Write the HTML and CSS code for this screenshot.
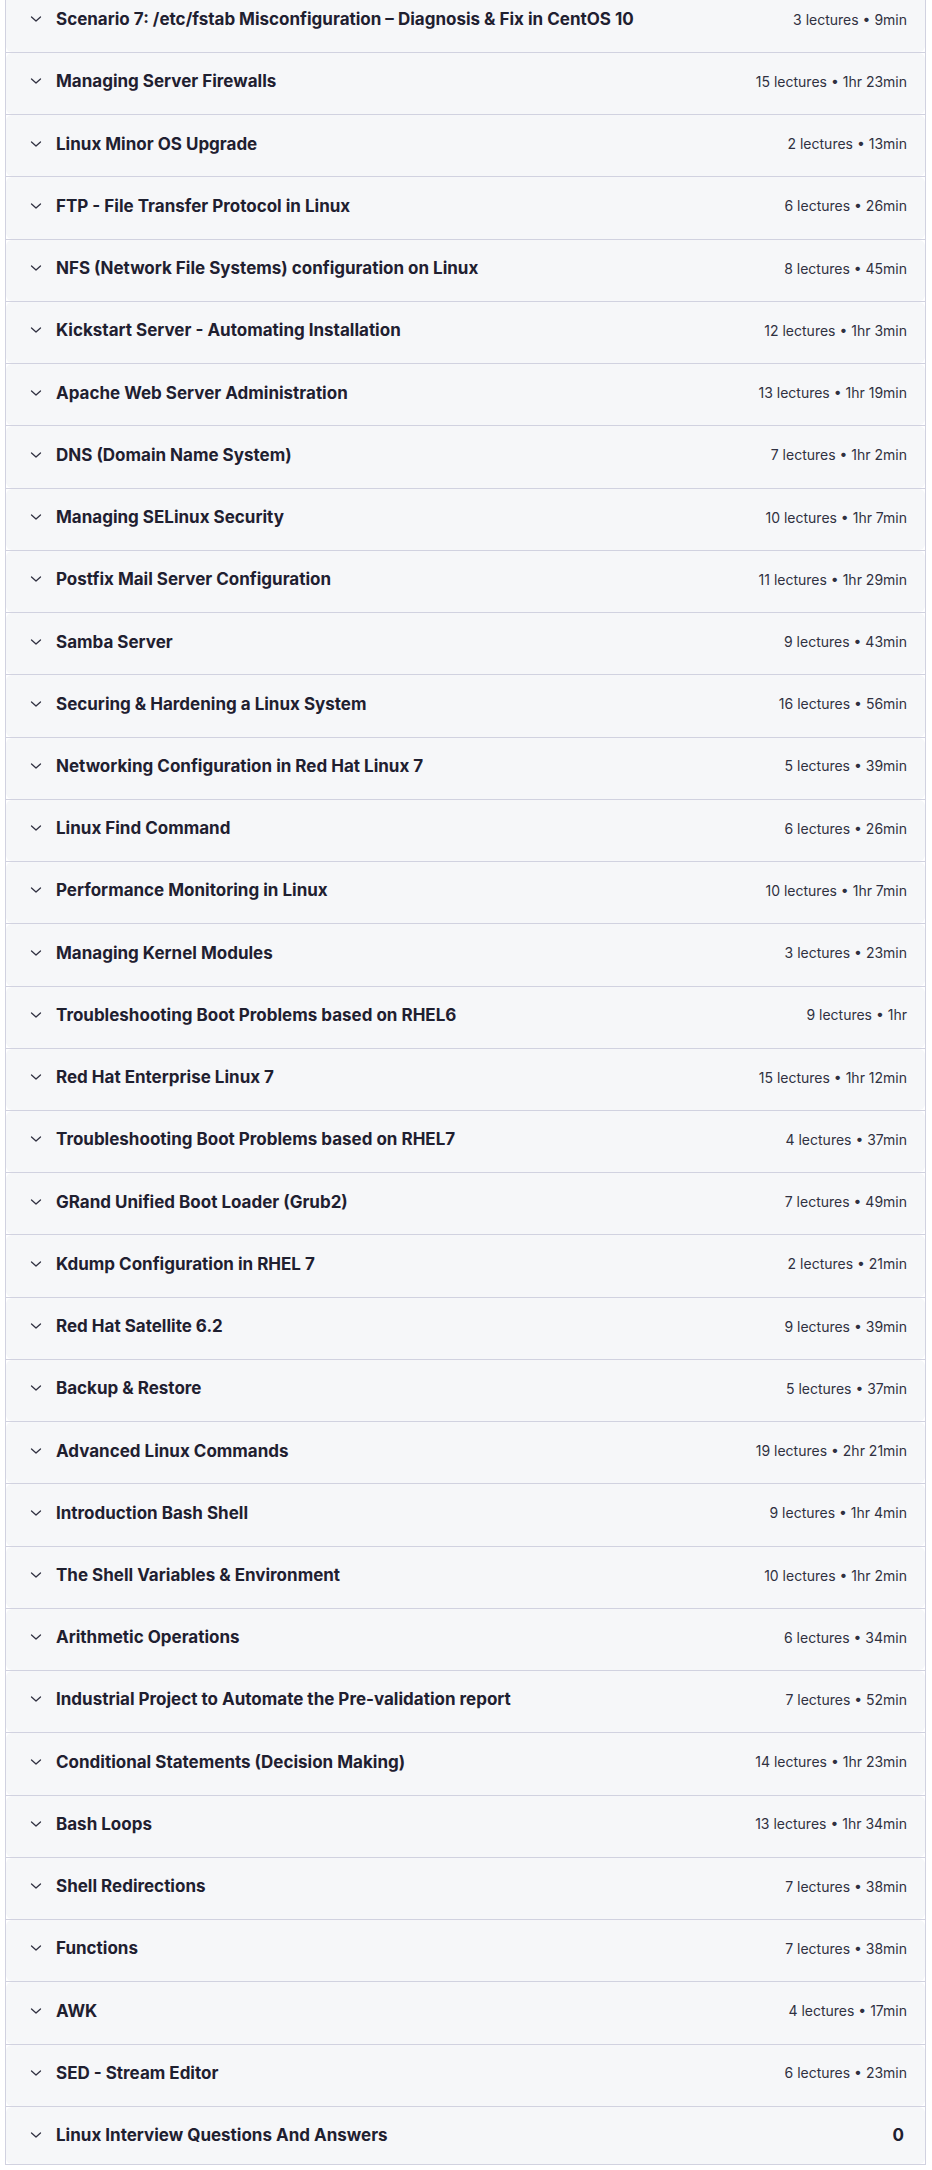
FILE: index.html
```html
<!DOCTYPE html>
<html lang="en">
<head>
    <meta charset="UTF-8">
    <title>Course content</title>
    <link rel="stylesheet" href="styles.css">
</head>
<body>
    <div class="curriculum">
        <div class="section">
            <div class="section-head">
                <svg class="chevron" viewBox="0 0 12 6"><path d="M1.5 1l4.5 4 4.5-4"/></svg>
                <span class="section-title">Scenario 7: /etc/fstab Misconfiguration – Diagnosis &amp; Fix in CentOS 10</span>
                <span class="section-meta">3 lectures • 9min</span>
            </div>
        </div>
        <div class="section">
            <div class="section-head">
                <svg class="chevron" viewBox="0 0 12 6"><path d="M1.5 1l4.5 4 4.5-4"/></svg>
                <span class="section-title">Managing Server Firewalls</span>
                <span class="section-meta">15 lectures • 1hr 23min</span>
            </div>
        </div>
        <div class="section">
            <div class="section-head">
                <svg class="chevron" viewBox="0 0 12 6"><path d="M1.5 1l4.5 4 4.5-4"/></svg>
                <span class="section-title">Linux Minor OS Upgrade</span>
                <span class="section-meta">2 lectures • 13min</span>
            </div>
        </div>
        <div class="section">
            <div class="section-head">
                <svg class="chevron" viewBox="0 0 12 6"><path d="M1.5 1l4.5 4 4.5-4"/></svg>
                <span class="section-title">FTP - File Transfer Protocol in Linux</span>
                <span class="section-meta">6 lectures • 26min</span>
            </div>
        </div>
        <div class="section">
            <div class="section-head">
                <svg class="chevron" viewBox="0 0 12 6"><path d="M1.5 1l4.5 4 4.5-4"/></svg>
                <span class="section-title">NFS (Network File Systems) configuration on Linux</span>
                <span class="section-meta">8 lectures • 45min</span>
            </div>
        </div>
        <div class="section">
            <div class="section-head">
                <svg class="chevron" viewBox="0 0 12 6"><path d="M1.5 1l4.5 4 4.5-4"/></svg>
                <span class="section-title">Kickstart Server - Automating Installation</span>
                <span class="section-meta">12 lectures • 1hr 3min</span>
            </div>
        </div>
        <div class="section">
            <div class="section-head">
                <svg class="chevron" viewBox="0 0 12 6"><path d="M1.5 1l4.5 4 4.5-4"/></svg>
                <span class="section-title">Apache Web Server Administration</span>
                <span class="section-meta">13 lectures • 1hr 19min</span>
            </div>
        </div>
        <div class="section">
            <div class="section-head">
                <svg class="chevron" viewBox="0 0 12 6"><path d="M1.5 1l4.5 4 4.5-4"/></svg>
                <span class="section-title">DNS (Domain Name System)</span>
                <span class="section-meta">7 lectures • 1hr 2min</span>
            </div>
        </div>
        <div class="section">
            <div class="section-head">
                <svg class="chevron" viewBox="0 0 12 6"><path d="M1.5 1l4.5 4 4.5-4"/></svg>
                <span class="section-title">Managing SELinux Security</span>
                <span class="section-meta">10 lectures • 1hr 7min</span>
            </div>
        </div>
        <div class="section">
            <div class="section-head">
                <svg class="chevron" viewBox="0 0 12 6"><path d="M1.5 1l4.5 4 4.5-4"/></svg>
                <span class="section-title">Postfix Mail Server Configuration</span>
                <span class="section-meta">11 lectures • 1hr 29min</span>
            </div>
        </div>
        <div class="section">
            <div class="section-head">
                <svg class="chevron" viewBox="0 0 12 6"><path d="M1.5 1l4.5 4 4.5-4"/></svg>
                <span class="section-title">Samba Server</span>
                <span class="section-meta">9 lectures • 43min</span>
            </div>
        </div>
        <div class="section">
            <div class="section-head">
                <svg class="chevron" viewBox="0 0 12 6"><path d="M1.5 1l4.5 4 4.5-4"/></svg>
                <span class="section-title">Securing &amp; Hardening a Linux System</span>
                <span class="section-meta">16 lectures • 56min</span>
            </div>
        </div>
        <div class="section">
            <div class="section-head">
                <svg class="chevron" viewBox="0 0 12 6"><path d="M1.5 1l4.5 4 4.5-4"/></svg>
                <span class="section-title">Networking Configuration in Red Hat Linux 7</span>
                <span class="section-meta">5 lectures • 39min</span>
            </div>
        </div>
        <div class="section">
            <div class="section-head">
                <svg class="chevron" viewBox="0 0 12 6"><path d="M1.5 1l4.5 4 4.5-4"/></svg>
                <span class="section-title">Linux Find Command</span>
                <span class="section-meta">6 lectures • 26min</span>
            </div>
        </div>
        <div class="section">
            <div class="section-head">
                <svg class="chevron" viewBox="0 0 12 6"><path d="M1.5 1l4.5 4 4.5-4"/></svg>
                <span class="section-title">Performance Monitoring in Linux</span>
                <span class="section-meta">10 lectures • 1hr 7min</span>
            </div>
        </div>
        <div class="section">
            <div class="section-head">
                <svg class="chevron" viewBox="0 0 12 6"><path d="M1.5 1l4.5 4 4.5-4"/></svg>
                <span class="section-title">Managing Kernel Modules</span>
                <span class="section-meta">3 lectures • 23min</span>
            </div>
        </div>
        <div class="section">
            <div class="section-head">
                <svg class="chevron" viewBox="0 0 12 6"><path d="M1.5 1l4.5 4 4.5-4"/></svg>
                <span class="section-title">Troubleshooting Boot Problems based on RHEL6</span>
                <span class="section-meta">9 lectures • 1hr</span>
            </div>
        </div>
        <div class="section">
            <div class="section-head">
                <svg class="chevron" viewBox="0 0 12 6"><path d="M1.5 1l4.5 4 4.5-4"/></svg>
                <span class="section-title">Red Hat Enterprise Linux 7</span>
                <span class="section-meta">15 lectures • 1hr 12min</span>
            </div>
        </div>
        <div class="section">
            <div class="section-head">
                <svg class="chevron" viewBox="0 0 12 6"><path d="M1.5 1l4.5 4 4.5-4"/></svg>
                <span class="section-title">Troubleshooting Boot Problems based on RHEL7</span>
                <span class="section-meta">4 lectures • 37min</span>
            </div>
        </div>
        <div class="section">
            <div class="section-head">
                <svg class="chevron" viewBox="0 0 12 6"><path d="M1.5 1l4.5 4 4.5-4"/></svg>
                <span class="section-title">GRand Unified Boot Loader (Grub2)</span>
                <span class="section-meta">7 lectures • 49min</span>
            </div>
        </div>
        <div class="section">
            <div class="section-head">
                <svg class="chevron" viewBox="0 0 12 6"><path d="M1.5 1l4.5 4 4.5-4"/></svg>
                <span class="section-title">Kdump Configuration in RHEL 7</span>
                <span class="section-meta">2 lectures • 21min</span>
            </div>
        </div>
        <div class="section">
            <div class="section-head">
                <svg class="chevron" viewBox="0 0 12 6"><path d="M1.5 1l4.5 4 4.5-4"/></svg>
                <span class="section-title">Red Hat Satellite 6.2</span>
                <span class="section-meta">9 lectures • 39min</span>
            </div>
        </div>
        <div class="section">
            <div class="section-head">
                <svg class="chevron" viewBox="0 0 12 6"><path d="M1.5 1l4.5 4 4.5-4"/></svg>
                <span class="section-title">Backup &amp; Restore</span>
                <span class="section-meta">5 lectures • 37min</span>
            </div>
        </div>
        <div class="section">
            <div class="section-head">
                <svg class="chevron" viewBox="0 0 12 6"><path d="M1.5 1l4.5 4 4.5-4"/></svg>
                <span class="section-title">Advanced Linux Commands</span>
                <span class="section-meta">19 lectures • 2hr 21min</span>
            </div>
        </div>
        <div class="section">
            <div class="section-head">
                <svg class="chevron" viewBox="0 0 12 6"><path d="M1.5 1l4.5 4 4.5-4"/></svg>
                <span class="section-title">Introduction Bash Shell</span>
                <span class="section-meta">9 lectures • 1hr 4min</span>
            </div>
        </div>
        <div class="section">
            <div class="section-head">
                <svg class="chevron" viewBox="0 0 12 6"><path d="M1.5 1l4.5 4 4.5-4"/></svg>
                <span class="section-title">The Shell Variables &amp; Environment</span>
                <span class="section-meta">10 lectures • 1hr 2min</span>
            </div>
        </div>
        <div class="section">
            <div class="section-head">
                <svg class="chevron" viewBox="0 0 12 6"><path d="M1.5 1l4.5 4 4.5-4"/></svg>
                <span class="section-title">Arithmetic Operations</span>
                <span class="section-meta">6 lectures • 34min</span>
            </div>
        </div>
        <div class="section">
            <div class="section-head">
                <svg class="chevron" viewBox="0 0 12 6"><path d="M1.5 1l4.5 4 4.5-4"/></svg>
                <span class="section-title">Industrial Project to Automate the Pre-validation report</span>
                <span class="section-meta">7 lectures • 52min</span>
            </div>
        </div>
        <div class="section">
            <div class="section-head">
                <svg class="chevron" viewBox="0 0 12 6"><path d="M1.5 1l4.5 4 4.5-4"/></svg>
                <span class="section-title">Conditional Statements (Decision Making)</span>
                <span class="section-meta">14 lectures • 1hr 23min</span>
            </div>
        </div>
        <div class="section">
            <div class="section-head">
                <svg class="chevron" viewBox="0 0 12 6"><path d="M1.5 1l4.5 4 4.5-4"/></svg>
                <span class="section-title">Bash Loops</span>
                <span class="section-meta">13 lectures • 1hr 34min</span>
            </div>
        </div>
        <div class="section">
            <div class="section-head">
                <svg class="chevron" viewBox="0 0 12 6"><path d="M1.5 1l4.5 4 4.5-4"/></svg>
                <span class="section-title">Shell Redirections</span>
                <span class="section-meta">7 lectures • 38min</span>
            </div>
        </div>
        <div class="section">
            <div class="section-head">
                <svg class="chevron" viewBox="0 0 12 6"><path d="M1.5 1l4.5 4 4.5-4"/></svg>
                <span class="section-title">Functions</span>
                <span class="section-meta">7 lectures • 38min</span>
            </div>
        </div>
        <div class="section">
            <div class="section-head">
                <svg class="chevron" viewBox="0 0 12 6"><path d="M1.5 1l4.5 4 4.5-4"/></svg>
                <span class="section-title">AWK</span>
                <span class="section-meta">4 lectures • 17min</span>
            </div>
        </div>
        <div class="section">
            <div class="section-head">
                <svg class="chevron" viewBox="0 0 12 6"><path d="M1.5 1l4.5 4 4.5-4"/></svg>
                <span class="section-title">SED - Stream Editor</span>
                <span class="section-meta">6 lectures • 23min</span>
            </div>
        </div>
        <div class="section">
            <div class="section-head">
                <svg class="chevron" viewBox="0 0 12 6"><path d="M1.5 1l4.5 4 4.5-4"/></svg>
                <span class="section-title">Linux Interview Questions And Answers</span>
                <span class="section-meta section-meta-empty">0</span>
            </div>
        </div>
    </div>
</body>
</html>
```

FILE: styles.css
```css
* {
    margin: 0;
    padding: 0;
    box-sizing: border-box;
}

body {
    font-family: Inter, "Noto Sans", Arial, sans-serif;
    background-color: #fff;
    color: #303141;
    overflow: hidden;
}

/* Outer frame of the curriculum list (scrolled a little past its top) */
.curriculum {
    width: 921px;
    margin: -10.24px 0 0 5px;
    border: 1px solid #d1d2e0;
    border-top: none;
    background-color: #fff;
}

.section {
    border-top: 1px solid #d1d2e0;
}

/* Collapsed section header row */
.section-head {
    display: flex;
    align-items: center;
    box-sizing: content-box;
    height: 56.8px;
    padding: 0 18px 4.44px 24px;
    background-color: #f6f7f9;
    border-radius: 6px;
}

.section:last-child .section-head {
    padding-bottom: 0;
}

.chevron {
    width: 12px;
    height: 6px;
    flex-shrink: 0;
    margin-right: 14px;
    fill: none;
    stroke: #303141;
    stroke-width: 1.3;
    stroke-linecap: round;
    stroke-linejoin: round;
}

.section-title {
    flex: 1;
    font-size: 17px;
    font-weight: 700;
    color: #1f2030;
}

.section-meta {
    font-size: 14px;
    color: #303141;
    white-space: nowrap;
}

.section-meta-empty {
    font-size: 17px;
    font-weight: 700;
    color: #1f2030;
    margin-right: 3px;
}
```
